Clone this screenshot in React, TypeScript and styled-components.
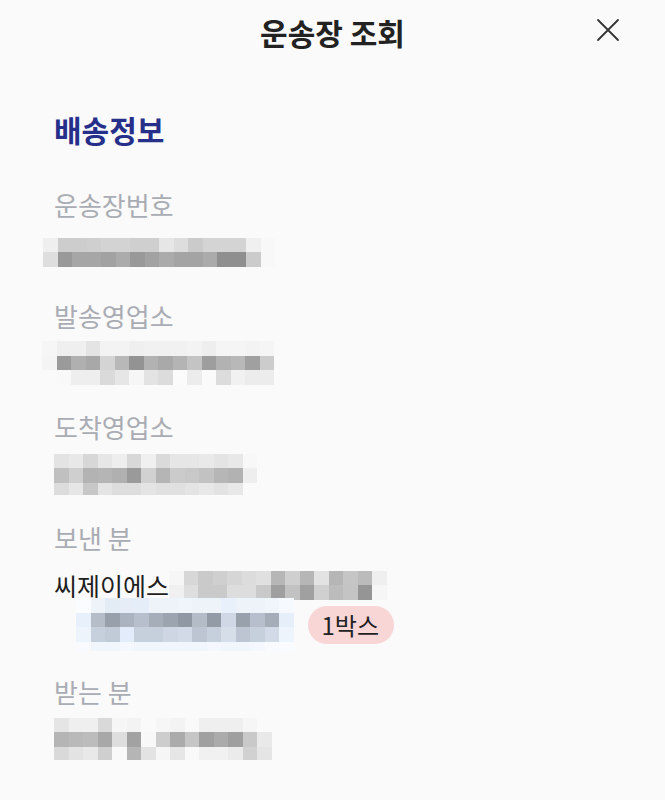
import styled, { createGlobalStyle } from 'styled-components';

const GlobalStyle = createGlobalStyle`
  html, body {
    margin: 0;
    padding: 0;
    background: #fafafa;
  }
  body {
    font-family: 'Noto Sans CJK KR', 'Noto Sans', sans-serif;
  }
`;

const Sheet = styled.div`
  width: 665px;
  height: 800px;
  background: #fafafa;
  overflow: hidden;
  display: flex;
  flex-direction: column;
`;

const Header = styled.header`
  height: 64px;
  display: flex;
  align-items: center;
  justify-content: center;
  position: relative;
`;

const Title = styled.h1`
  margin: 0;
  font-size: 30px;
  font-weight: 700;
  color: #222;
  letter-spacing: 0;
`;

const CloseButton = styled.button`
  position: absolute;
  right: 44px;
  top: 17px;
  width: 26px;
  height: 26px;
  padding: 0;
  border: none;
  background: none;
  display: flex;
  align-items: center;
  justify-content: center;
  cursor: pointer;
  color: #333;
`;

const Body = styled.main`
  padding: 45px 54px 0;
  display: flex;
  flex-direction: column;
`;

const SectionTitle = styled.h2`
  margin: 0 0 38px;
  height: 40px;
  line-height: 40px;
  font-size: 30px;
  font-weight: 700;
  color: #26308a;
`;

const FieldList = styled.div`
  display: flex;
  flex-direction: column;
  gap: 28px;
`;

const Field = styled.div`
  display: flex;
  flex-direction: column;
  gap: 11px;
`;

const Label = styled.div`
  height: 36px;
  line-height: 36px;
  font-size: 26px;
  color: #a9acb3;
`;

const ValueRow = styled.div<{ $indent?: number; $height?: number }>`
  height: ${(p) => p.$height ?? 36}px;
  display: flex;
  align-items: center;
  padding-left: ${(p) => p.$indent ?? 0}px;
  font-size: 25px;
  color: #1e1e1e;
`;

const SenderBlock = styled.div`
  display: flex;
  flex-direction: column;
`;

const Grid = styled.div<{ $shift: number }>`
  display: flex;
  flex-direction: column;
  margin-left: ${(p) => p.$shift}px;
  flex-shrink: 0;
`;

const GridRow = styled.div<{ $h: number }>`
  display: flex;
  height: ${(p) => p.$h}px;
`;

const Cell = styled.span`
  width: 14.5px;
  height: 100%;
  flex-shrink: 0;
`;

const Badge = styled.span`
  margin-left: 14px;
  height: 38px;
  padding: 0 15px 0 14px;
  border-radius: 19px;
  background: #f9d6d6;
  color: #222;
  font-size: 24px;
  display: inline-flex;
  align-items: center;
`;

type Rows = { h: number; c: string[] }[];

const Mosaic = ({ rows, shift = 0 }: { rows: Rows; shift?: number }) => (
  <Grid $shift={shift}>
    {rows.map((r, i) => (
      <GridRow key={i} $h={r.h}>
        {r.c.map((c, j) => (
          <Cell key={j} style={{ background: c }} />
        ))}
      </GridRow>
    ))}
  </Grid>
);

const g = (s: string) => s.split(' ').map((v) => '#' + v);

const waybill: Rows = [
  { h: 14.5, c: g('efefef cdcdcd cdcdcd cfcfcf d3d3d3 d3d3d3 cfcfcf cfcfcf e6e6e6 dddddd cbcbcb d4d4d4 d4d4d4 d4d4d4 f0f0f0 f8f8f8') },
  { h: 14.5, c: g('dedede 999999 a6a6a6 a6a6a6 a2a2a2 ababab 999999 a2a2a2 ababab a4a4a4 a4a4a4 ababab 8f8f8f 8f8f8f cbcbcb f8f8f8') },
];

const origin: Rows = [
  { h: 14.5, c: g('f6f6f6 efefef efefef e4e4e4 f3f3f3 f3f3f3 efefef f1f1f1 f1f1f1 f1f1f1 f3f3f3 eeeeee f5f5f5 f5f5f5 f3f3f3 f5f5f5') },
  { h: 14.5, c: g('f4f4f4 9a9a9a b0b0b0 a8a8a8 d4d4d4 b8b8b8 939393 b2b2b2 a9a9a9 b4b4b4 c4c4c4 9e9e9e b2b2b2 b8b8b8 a0a0a0 cccccc') },
  { h: 14.5, c: g('fafafa f9f9f9 eeeeee eeeeee dadada e6e6e6 f6f6f6 e3e3e3 dcdcdc fbfbfb ececec fafafa dcdcdc f1f1f1 ececec ececec') },
];

const destination: Rows = [
  { h: 14.5, c: g('e3e3e3 e8e8e8 d7d7d7 e6e6e6 eeeeee d8d8d8 f0f0f0 dadada e6e6e6 e6e6e6 e9e9e9 e4e4e4 e8e8e8 f8f8f8') },
  { h: 14.5, c: g('c0c0c0 cfcfcf b3b3b3 b5b5b5 b0b0b0 9a9a9a d1d1d1 b5b5b5 cbcbcb c8c8c8 c2c2c2 b6b6b6 b2b2b2 eeeeee') },
  { h: 12, c: g('dcdcdc e6e6e6 c7c7c7 e4e4e4 dddddd dddddd e4e4e4 e0e0e0 e0e0e0 e4e4e4 e8e8e8 e3e3e3 e8e8e8 fafafa') },
];

const senderName: Rows = [
  { h: 14.5, c: g('f6f6f6 d7d7d7 cacaca cfcfcf d6d6d6 dcdcdc e0e0e0 b6b6b6 cfcfcf b6b6b6 e3e3e3 b6b6b6 c5c5c5 bbbbbb efefef') },
  { h: 14.5, c: g('f0f0f0 dedede cacaca cacaca dddddd dddddd c9c9c9 9f9f9f c2c2c2 a0a0a0 d0d0d0 bcbcbc c4c4c4 959595 f6f6f6') },
];

const senderAddr: Rows = [
  { h: 14.5, c: g('fafcff eef3fa e3ebf5 e6edf7 e5edf8 eef3fa eef3fa f0f4fb eef3fa eef3fa e8f0fb eef3fa eef3fa f0f5fb f6f9fd') },
  { h: 14.5, c: g('e8f0fc b5bdc8 98a1ab aab3bf b6bfcb a5aeb9 9ba4af 8f98a3 b3bcc7 929ba6 cfd8e4 98a1ac b6bfcb a4adb8 e6eefa') },
  { h: 14.5, c: g('eef4fc c6d0dc c1cbd8 e3ecfa c6d0dc c6d0dc cdd6e2 d1dae6 bcc5d1 c6d0dc d5dee9 bcc5d1 c6d0dc d1dae6 eef4fc') },
  { h: 9, c: g('f8fafe f1f5fc f1f5fc f4f7fd f1f5fc f1f5fc f1f5fc f1f5fc f1f5fc f4f7fd f1f5fc f1f5fc f4f7fd f8fafe fafbfe') },
];

const receiver: Rows = [
  { h: 14.5, c: g('e5e5e5 efefef efefef d9d9d9 f6f6f6 f3f3f3 fafafa f6f6f6 f3f3f3 f9f9f9 efefef efefef efefef f6f6f6 fafafa') },
  { h: 14.5, c: g('b5b5b5 b9b9b9 bcbcbc a8a8a8 dedede a2a2a2 f8f8f8 cdcdcd ababab c6c6c6 a0a0a0 ababab 9f9f9f c9c9c9 e9e9e9') },
  { h: 13.5, c: g('d9d9d9 e3e3e3 e9e9e9 cfcfcf f9f9f9 b5b5b5 e3e3e3 f6f6f6 e6e6e6 f9f9f9 f1f1f1 f1f1f1 ebebeb d1d1d1 e5e5e5') },
];

const CloseIcon = () => (
  <svg width="24" height="24" viewBox="0 0 24 24" fill="none" stroke="currentColor" strokeWidth="1.8" strokeLinecap="round">
    <path d="M2 2 L22 22 M22 2 L2 22" />
  </svg>
);

const App = () => (
  <Sheet>
    <GlobalStyle />
    <Header>
      <Title>운송장 조회</Title>
      <CloseButton title="닫기">
        <CloseIcon />
      </CloseButton>
    </Header>
    <Body>
      <SectionTitle>배송정보</SectionTitle>
      <FieldList>
        <Field>
          <Label>운송장번호</Label>
          <ValueRow>
            <Mosaic rows={waybill} shift={-11} />
          </ValueRow>
        </Field>
        <Field>
          <Label>발송영업소</Label>
          <ValueRow>
            <Mosaic rows={origin} shift={-12} />
          </ValueRow>
        </Field>
        <Field>
          <Label>도착영업소</Label>
          <ValueRow>
            <Mosaic rows={destination} />
          </ValueRow>
        </Field>
        <Field>
          <Label>보낸 분</Label>
          <SenderBlock>
            <ValueRow>
              씨제이에스
              <Mosaic rows={senderName} />
            </ValueRow>
            <ValueRow $indent={22} $height={43}>
              <Mosaic rows={senderAddr} />
              <Badge>1박스</Badge>
            </ValueRow>
          </SenderBlock>
        </Field>
        <Field>
          <Label>받는 분</Label>
          <ValueRow>
            <Mosaic rows={receiver} />
          </ValueRow>
        </Field>
      </FieldList>
    </Body>
  </Sheet>
);

export default App;
